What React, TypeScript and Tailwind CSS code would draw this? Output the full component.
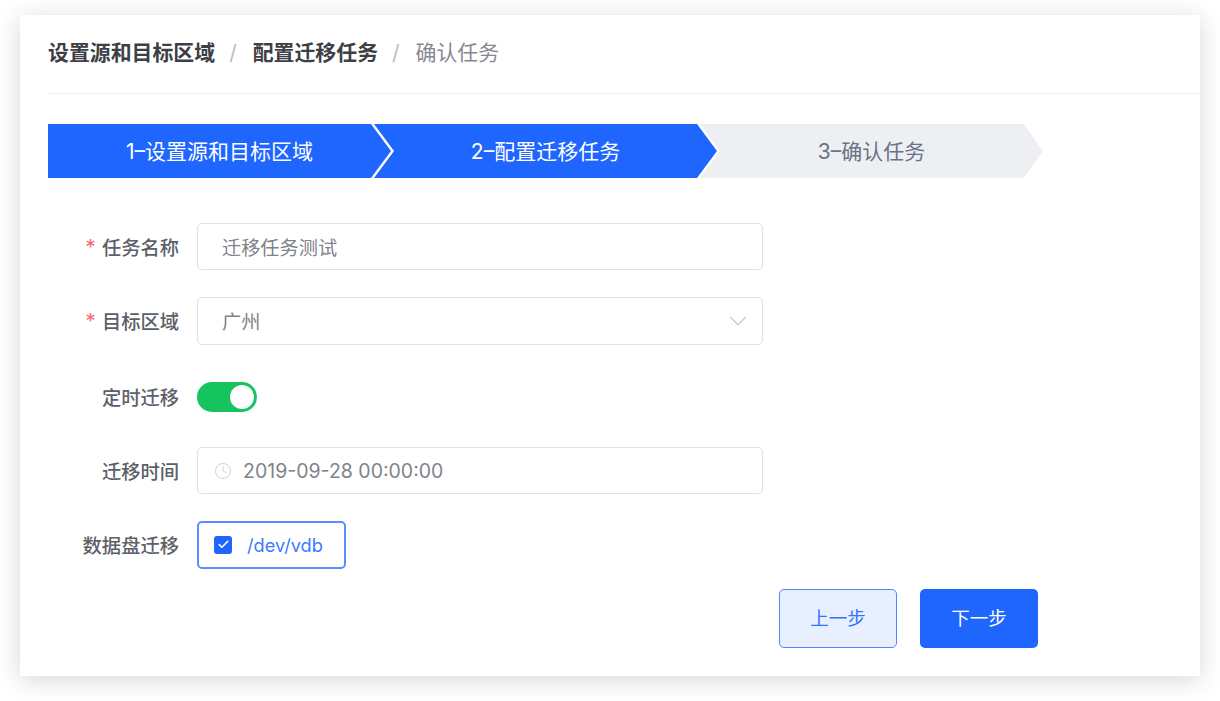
import { Check, ChevronDown, Clock } from "lucide-react";

const font = "font-['Inter','Noto_Sans_CJK_SC',sans-serif]";

function FormRow({ label, required, children, className = "" }: { label: string; required?: boolean; children: React.ReactNode; className?: string }) {
  return (
    <div className={`flex items-center h-[47px] ${className}`}>
      <label className="w-[131px] pt-[3px] flex justify-end items-center text-[19.3px] font-medium text-[#5c6068] whitespace-nowrap">
        {required && <span className="text-[#f56c6c] mr-[6px] text-[21px] font-normal">*</span>}
        {label}
      </label>
      <div className="ml-[18px] flex items-center">{children}</div>
    </div>
  );
}

export default function App() {
  return (
    <div className={`w-[1220px] h-[701px] bg-white pt-[15px] px-[20px] overflow-hidden ${font}`}>
      <div className="h-[661px] bg-white shadow-[0_4px_24px_rgba(0,0,0,0.16)] pl-[28px]">
        {/* breadcrumb */}
        <div className="h-[79px] border-b border-[#eceef2] flex items-center text-[20.9px] pb-[3px]">
          <span className="font-semibold text-[#3d3f45]">设置源和目标区域</span>
          <span className="ml-[14px] mr-[16px] text-[#b9bdc6]">/</span>
          <span className="font-semibold text-[#3d3f45]">配置迁移任务</span>
          <span className="ml-[14px] mr-[16px] text-[#b9bdc6]">/</span>
          <span className="text-[#85888f]">确认任务</span>
        </div>

        {/* steps */}
        <div className="flex mt-[30px] text-[21px]">
          <div className="w-[343px] h-[54px] pt-[1px] bg-[#1f66ff] text-white flex items-center justify-center [clip-path:polygon(0_0,323px_0,343px_50%,323px_100%,0_100%)]">
            1–设置源和目标区域
          </div>
          <div className="w-[343px] h-[54px] pt-[1px] -ml-[17px] bg-[#1f66ff] text-white flex items-center justify-center [clip-path:polygon(0_0,323px_0,343px_50%,323px_100%,0_100%,20px_50%)]">
            2–配置迁移任务
          </div>
          <div className="w-[343px] h-[54px] pt-[1px] -ml-[17px] bg-[#edeff3] text-[#6b7385] flex items-center justify-center [clip-path:polygon(0_0,324px_0,343px_50%,324px_100%,0_100%,20px_50%)]">
            3–确认任务
          </div>
        </div>

        {/* form */}
        <div className="mt-[45px] flex flex-col">
          <FormRow label="任务名称" required>
            <div className="w-[566px] h-[47px] pt-[3px] border border-[#dfe1e8] rounded-[5px] pl-[24px] flex items-center text-[19.2px] text-[#808389]">
              迁移任务测试
            </div>
          </FormRow>
          <FormRow label="目标区域" required className="mt-[27px]">
            <div className="w-[566px] h-[48px] pt-[4px] border border-[#dfe1e8] rounded-[5px] pl-[24px] pr-[9px] flex items-center justify-between text-[19.2px] text-[#808389]">
              广州
              <ChevronDown size={30} strokeWidth={0.9} className="text-[#c4c7d0] -mt-[4px]" />
            </div>
          </FormRow>
          <FormRow label="定时迁移" className="mt-[29px]">
            <div className="w-[60px] h-[30px] rounded-full bg-[#16c45f] flex items-center justify-end pr-[3px]">
              <div className="w-[24px] h-[24px] rounded-full bg-white" />
            </div>
          </FormRow>
          <FormRow label="迁移时间" className="mt-[27px]">
            <div className="w-[566px] h-[47px] pt-[2px] border border-[#dfe1e8] rounded-[5px] pl-[16px] flex items-center text-[19.5px] text-[#808389]">
              <Clock size={18} strokeWidth={1.1} className="text-[#c4c7d0] mr-[11px] -mt-[2px]" />
              2019-09-28 00:00:00
            </div>
          </FormRow>
          <FormRow label="数据盘迁移" className="mt-[27px]">
            <div className="w-[149px] h-[48px] pt-[2px] border-2 border-[#5a8dff] rounded-[5px] pl-[15px] flex items-center text-[18.2px] text-[#3b7bff]">
              <span className="w-[18px] h-[18px] -mt-[2px] rounded-[3px] bg-[#1f66ff] flex items-center justify-center mr-[15px]">
                <Check size={13} strokeWidth={3} className="text-white" />
              </span>
              /dev/vdb
            </div>
          </FormRow>
        </div>

        {/* buttons */}
        <div className="flex mt-[21px] ml-[731px] gap-[23px]">
          <button className="w-[118px] h-[59px] pt-[1px] rounded-[5px] border border-[#4f86ff] bg-[#e8efff] text-[#2f72ff] text-[18.5px] flex items-center justify-center">
            上一步
          </button>
          <button className="w-[118px] h-[59px] pt-[1px] rounded-[5px] bg-[#1f66ff] text-white text-[18.5px] flex items-center justify-center">
            下一步
          </button>
        </div>
      </div>
    </div>
  );
}
